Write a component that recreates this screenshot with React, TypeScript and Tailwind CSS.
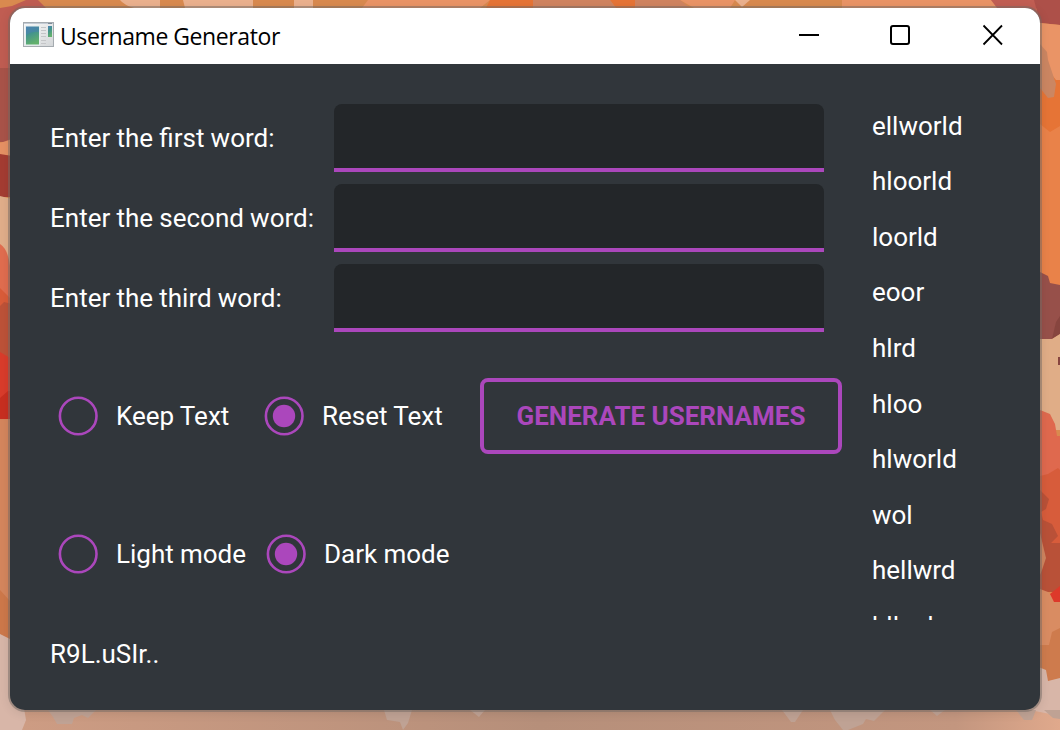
const fields = ["Enter the first word:", "Enter the second word:", "Enter the third word:"];

const usernames = [
  "ellworld",
  "hloorld",
  "loorld",
  "eoor",
  "hlrd",
  "hloo",
  "hlworld",
  "wol",
  "hellwrd",
  "hlloeh",
];

function Wallpaper() {
  return (
    <svg className="absolute inset-0" width="1060" height="730" viewBox="0 0 1060 730">
      <defs>
        <linearGradient id="floor" x1="0" x2="1" y1="0" y2="0">
          <stop offset="0" stopColor="#cd9c83" />
          <stop offset="0.5" stopColor="#b68f7a" />
          <stop offset="0.9" stopColor="#c3967f" />
          <stop offset="1" stopColor="#e0a98c" />
        </linearGradient>
      </defs>
      <rect width="1060" height="730" fill="#d98a4f" />
      <path d="M120 0H160V8H134Q124 5 120 0ZM183 0H253V8H185ZM294 0H313V8H294Z" fill="#ebb18e" />
      <path d="M368 0H490L480 8H362ZM680 0H735L730 8H694ZM842 0H991L1000 8H842Z" fill="#ea9466" />
      <path d="M490 0H533V8H486ZM610 0H635V8H616Z" fill="#e67436" />
      <path d="M533 0H610L616 8H533ZM635 0H680L690 8H635Z" fill="#d08460" />
      <path d="M735 0H750L742 7Z" fill="#ebb18e" />
      <path d="M0 8L12 6L26 0H38L46 8V70H0Z" fill="#c05d52" />
      <path d="M0 68H12V142H0Z" fill="#a95349" />
      <path d="M0 143L12 139V155H0Z" fill="#e69164" />
      <path d="M0 154L12 156V197H0Z" fill="#a43c32" />
      <path d="M0 196L12 199V266H0Z" fill="#e0ae8a" />
      <path d="M0 244Q8 249 10 266V310H0Z" fill="#e06d4f" />
      <path d="M0 288L10 298V330H0Z" fill="#d95c39" />
      <path d="M0 306L4 302L12 304V370H0Z" fill="#bd5238" />
      <path d="M0 352L10 358V398H0Z" fill="#d93c2b" />
      <path d="M0 398L8 391H12V419H0Z" fill="#c82f20" />
      <path d="M0 419H12V604H0Z" fill="#d4865d" />
      <path d="M0 590L10 601V640H0Z" fill="#cd784a" />
      <path d="M0 634L12 640L28 708V730H0Z" fill="#d8b6a8" />
      <path d="M991 0H1036V12H1000Z" fill="#c15e53" />
      <path d="M1034 0H1060V25L1040 23Z" fill="#ad5049" />
      <path d="M1020 8H1036L1041 23V40H1020Z" fill="#c15e53" />
      <path d="M1040 23L1060 25V82H1040Z" fill="#ea9466" />
      <path d="M1040 90L1048 98L1056 92V80H1060V290H1040Z" fill="#e98249" />
      <path d="M1040 62L1048 70L1056 80H1060V126L1050 132L1040 124Z" fill="#e67436" />
      <path d="M1040 44L1047 52L1048 60L1056 84L1054 97L1048 98L1040 88Z" fill="#cb8662" />
      <path d="M1040 272L1048 276L1050 283L1060 285V334L1052 339H1040Z" fill="#97504a" />
      <path d="M1056 322L1060 316V334L1052 339Z" fill="#87453f" />
      <path d="M1040 339H1052L1060 334V430H1040Z" fill="#e0ad87" />
      <path d="M1058 357H1060V365H1058Z" fill="#87453f" />
      <path d="M1040 410L1050 414L1055 424L1057 436H1060V480H1040Z" fill="#df694e" />
      <path d="M1040 476L1048 474L1058 468L1060 470V590H1040Z" fill="#d75c3b" />
      <path d="M1040 490L1049 499L1046 509L1041 512L1043 520L1052 524L1058 536L1051 543H1060V592H1040Z" fill="#b95138" />
      <path d="M1040 533L1046 558L1042 570L1040 575Z" fill="#cf855f" />
      <path d="M1040 589L1048 592L1060 602V668H1040Z" fill="#d98c62" />
      <path d="M1050 594L1060 586V602H1054Z" fill="#dd392a" />
      <path d="M1040 645H1049L1052 632L1060 628V682H1040Z" fill="#ce7b4d" />
      <path d="M1036 666L1046 670L1048 681L1060 678V730H1020V700Z" fill="#d8b6a8" />
      <path d="M24 708H1020L1060 716V730H22L26 720Z" fill="url(#floor)" />
      <path d="M48 710H96L88 718L82 715L74 718L72 724H57L53 717ZM384 710H412L408 723L403 730L400 722L387 720ZM470 710H485L479 717ZM782 710H803L795 722H791ZM830 710H885L874 721L866 719L863 724L848 730H843L835 720ZM930 710H945L937 716ZM1016 710H1036L1032 720H1024ZM1044 710H1060V719L1053 718Z" fill="#bfa294" />
    </svg>
  );
}

function AppIcon() {
  return (
    <svg width="32" height="26" viewBox="0 0 32 26" className="-mt-0.5 shrink-0">
      <defs>
        <linearGradient id="pane" x1="0" x2="0.35" y1="0" y2="1">
          <stop offset="0" stopColor="#5083b5" />
          <stop offset="0.45" stopColor="#42938e" />
          <stop offset="1" stopColor="#62b06c" />
        </linearGradient>
        <linearGradient id="chrome" x1="0" x2="1" y1="0" y2="1">
          <stop offset="0" stopColor="#fafafa" />
          <stop offset="1" stopColor="#d3d6d8" />
        </linearGradient>
      </defs>
      <rect x="0.5" y="0.5" width="30" height="24" fill="url(#chrome)" stroke="#a5abb0" />
      <path d="M1 1.5H30" stroke="#c3cbd4" />
      <path d="M25 1.5H29" stroke="#7e8b99" />
      <rect x="2.5" y="4" width="14" height="19" fill="url(#pane)" stroke="#e4eef0" />
      <path d="M3 13Q9 9 16 10V5H3Z" fill="#4a82b0" opacity="0.55" />
      <path d="M18 5.5H23M18 8.5H23M18 11.5H23M18 14.5H23M18 18.5H23M18 21.5H23" stroke="#c4c6c8" />
      <rect x="25" y="4" width="4" height="11" fill="url(#pane)" />
    </svg>
  );
}

function Radio({ label, checked = false }: { label: string; checked?: boolean }) {
  return (
    <label className="flex items-center gap-[18px] whitespace-nowrap">
      <svg width="40" height="40" viewBox="0 0 40 40" className="shrink-0">
        <circle cx="20.2" cy="20" r="18.3" fill="none" stroke="#ab47bc" strokeWidth="2.6" />
        {checked && <circle cx="20" cy="20" r="11.2" fill="#ab47bc" />}
      </svg>
      <span>{label}</span>
    </label>
  );
}

function TitleBar() {
  return (
    <header className="flex h-14 shrink-0 items-center bg-white pl-[13px] text-black">
      <AppIcon />
      <h1 className="ml-[5px] flex-1 whitespace-nowrap font-['Open_Sans','Noto_Sans',sans-serif] text-[23px] font-normal leading-8 tracking-[-0.4px]">
        Username Generator
      </h1>
      <svg width="204" height="22" viewBox="0 0 204 22" className="-mt-0.5 mr-[37px]" fill="none" stroke="#000">
        <path d="M0 11H20" strokeWidth="2" />
        <rect x="92" y="2" width="18" height="18" rx="2" strokeWidth="2" />
        <path d="M184.5 1.5L203 20.5M203 1.5L184.5 20.5" strokeWidth="1.8" />
      </svg>
    </header>
  );
}

export default function App() {
  return (
    <div className="relative h-[730px] w-[1060px] overflow-hidden">
      <Wallpaper />
      <div className="relative pb-5 pl-[10px] pr-5 pt-2">
        <main className="flex h-[702px] flex-col overflow-hidden rounded-[15px] bg-[#31363b] font-['Roboto',sans-serif] text-[26px] leading-8 text-white [word-spacing:-0.25px] shadow-[0_0_0_2px_rgba(115,105,100,0.5),0_2px_12px_rgba(0,0,0,0.12)]">
          <TitleBar />
          <div className="flex flex-1 pl-10">
            <section className="flex w-[792px] shrink-0 flex-col pt-10">
              <div className="flex flex-col gap-3">
                {fields.map((text) => (
                  <label key={text} className="flex items-center">
                    <span className="w-[284px] shrink-0 whitespace-nowrap">{text}</span>
                    <input className="h-[68px] w-[490px] rounded-t-lg border-b-4 border-[#ab47bc] bg-[#232629] px-4 outline-none" />
                  </label>
                ))}
              </div>
              <div className="mt-[46px] flex h-[76px] items-center pl-2">
                <div className="w-[206px]">
                  <Radio label="Keep Text" />
                </div>
                <div className="w-[216px]">
                  <Radio label="Reset Text" checked />
                </div>
                <button className="h-[76px] w-[362px] whitespace-nowrap rounded-lg border-4 border-[#ab47bc] text-[26px] font-bold text-[#ab47bc]">
                  GENERATE USERNAMES
                </button>
              </div>
              <div className="mt-20 flex items-center pl-2">
                <div className="w-[208px]">
                  <Radio label="Light mode" />
                </div>
                <Radio label="Dark mode" checked />
              </div>
              <p className="mt-16">R9L.uSIr..</p>
            </section>
            <ul className="mt-[34px] h-[522px] flex-1 overflow-hidden pl-[30px]">
              {usernames.map((name) => (
                <li key={name} className="flex h-[55.55px] items-center">
                  {name}
                </li>
              ))}
            </ul>
          </div>
        </main>
      </div>
    </div>
  );
}
